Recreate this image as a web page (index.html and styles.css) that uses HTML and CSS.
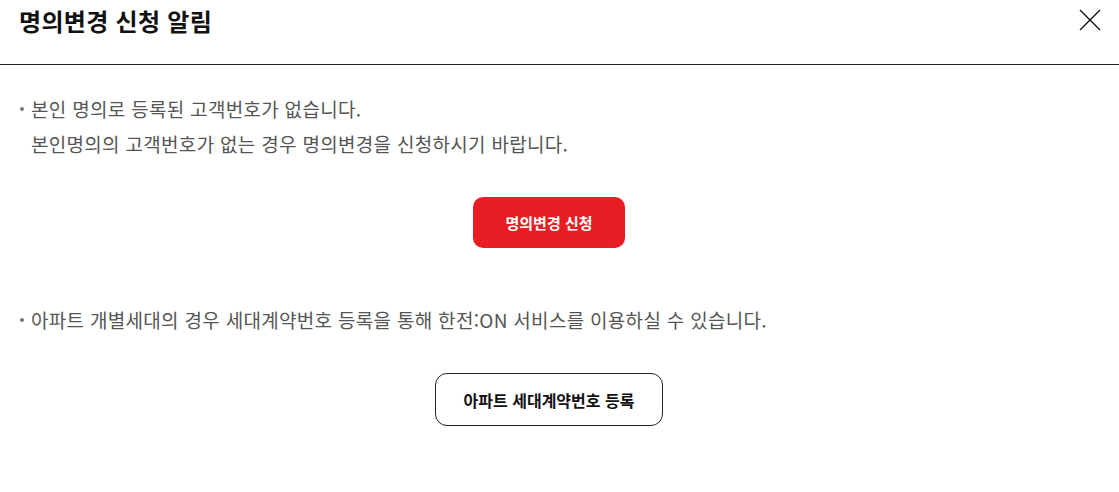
FILE: index.html
```html
<!DOCTYPE html>
<html lang="ko">
<head>
<meta charset="utf-8">
<link rel="stylesheet" href="styles.css">
</head>
<body>
<div class="modal">
  <header class="modal-head">
    <h1 class="title">명의변경 신청 알림</h1>
    <button class="close" aria-label="닫기">
      <svg width="22" height="22" viewBox="0 0 22 22"><path d="M1 1 L21 21 M21 1 L1 21" stroke="#111" stroke-width="1.4" fill="none"/></svg>
    </button>
  </header>
  <div class="modal-body">
    <ul class="notes">
      <li>본인 명의로 등록된 고객번호가 없습니다.<br>본인명의의 고객번호가 없는 경우 명의변경을 신청하시기 바랍니다.</li>
    </ul>
    <div class="actions"><button class="btn btn-red">명의변경 신청</button></div>
    <ul class="notes notes-2">
      <li>아파트 개별세대의 경우 세대계약번호 등록을 통해 한전:ON 서비스를 이용하실 수 있습니다.</li>
    </ul>
    <div class="actions"><button class="btn btn-line">아파트 세대계약번호 등록</button></div>
  </div>
</div>
</body>
</html>
```
FILE: styles.css
```css
* { box-sizing: border-box; }
html, body { margin: 0; padding: 0; background: #fff; }
body { font-family: "Noto Sans CJK KR", "Noto Sans", sans-serif; color: #222; }
.modal { width: 1119px; }
.modal-head {
  height: 65px;
  border-bottom: 1px solid #222;
  display: flex;
  align-items: flex-start;
  justify-content: space-between;
  padding: 0 18px 0 19px;
}
.title { margin: 0; padding-top: 1px; font-size: 24px; font-weight: 700; line-height: 40px; color: #111; letter-spacing: 0.3px; }
.close { background: none; border: 0; padding: 0; margin-top: 9px; width: 22px; height: 22px; cursor: pointer; }
.close svg { display: block; }
.modal-body { padding: 26px 20px 0; }
.notes { list-style: none; margin: 0; padding: 0; }
.notes li { position: relative; padding-left: 11px; font-size: 19px; letter-spacing: 0.3px; line-height: 35px; color: #555; }
.notes li::before { content: ""; position: absolute; left: 0; top: 16px; width: 4px; height: 4px; border-radius: 50%; background: #777; }
.actions { display: flex; justify-content: center; }
.actions .btn { margin-right: 21px; }
.btn { font-family: inherit; font-weight: 700; cursor: pointer; }
.btn-red { margin-top: 36px; width: 152px; height: 51px; border: 0; border-radius: 10px; background: #e91e25; color: #fff; font-size: 15px; }
.notes-2 { margin-top: 54px; }
.btn-line { margin-top: 36px; width: 228px; height: 53px; border: 1px solid #222; border-radius: 12px; background: #fff; color: #111; font-size: 16px; }
```
